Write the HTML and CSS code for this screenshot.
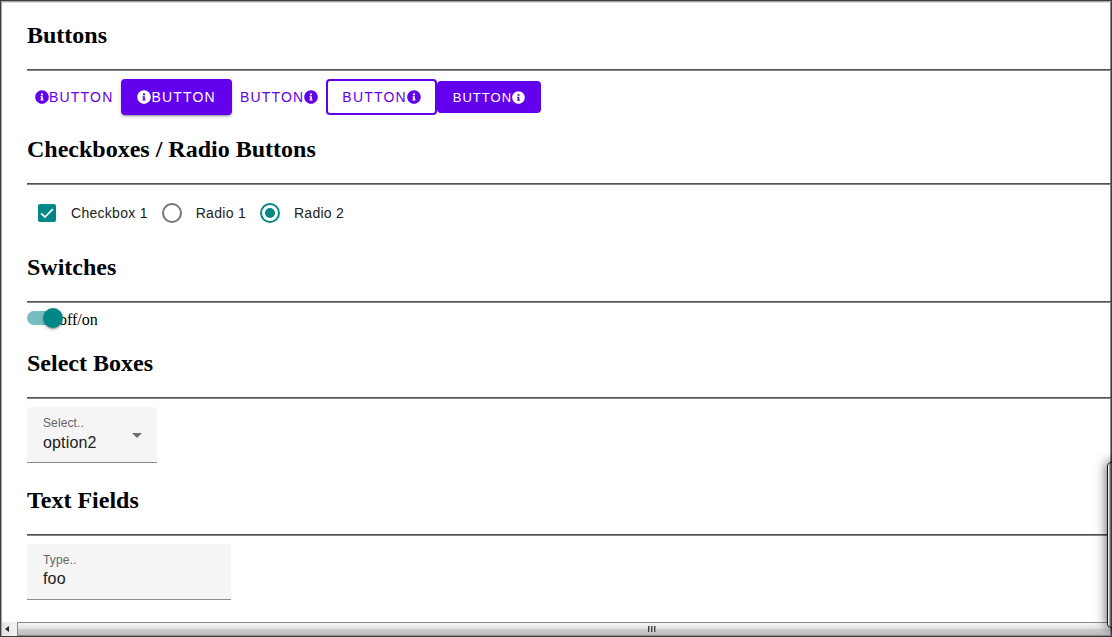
FILE: index.html
```html
<!DOCTYPE html>
<html lang="en">
<head>
<meta charset="utf-8">
<title>Components</title>
<link rel="stylesheet" href="styles.css">
</head>
<body>
<svg class="defs" aria-hidden="true">
  <symbol id="info" viewBox="0 0 512 512">
    <path fill="currentColor" fill-rule="evenodd" d="M256 8C119 8 8 119 8 256s111 248 248 248 248-111 248-248S393 8 256 8zm0 110a42 42 0 1 1 0 84 42 42 0 0 1 0-84zm56 254c0 7-5 12-12 12h-88c-7 0-12-5-12-12v-24c0-7 5-12 12-12h12v-64h-12c-7 0-12-5-12-12v-24c0-7 5-12 12-12h64c7 0 12 5 12 12v100h12c7 0 12 5 12 12z"/>
  </symbol>
</svg>
<main class="page">
  <section class="section">
    <h2 class="heading">Buttons</h2>
    <hr class="rule">
    <div class="row buttons">
      <button class="btn" type="button"><svg class="icon"><use href="#info"/></svg>BUTTON</button>
      <button class="btn raised" type="button"><svg class="icon"><use href="#info"/></svg>BUTTON</button>
      <button class="btn" type="button">BUTTON<svg class="icon"><use href="#info"/></svg></button>
      <button class="btn outlined" type="button">BUTTON<svg class="icon"><use href="#info"/></svg></button>
      <button class="btn dense" type="button">BUTTON<svg class="icon"><use href="#info"/></svg></button>
    </div>
  </section>
  <section class="section">
    <h2 class="heading">Checkboxes / Radio Buttons</h2>
    <hr class="rule">
    <div class="row choices">
      <label class="choice">
        <span class="touch">
          <input class="checkbox" type="checkbox" checked>
          <svg class="tick" viewBox="0 0 24 24"><path d="M2 12.5 8.5 19 22 5.5" fill="none" stroke="#fff" stroke-width="3"/></svg>
        </span>
        <span>Checkbox 1</span>
      </label>
      <label class="choice"><span class="touch"><input class="radio" type="radio" name="radios"></span><span>Radio 1</span></label>
      <label class="choice"><span class="touch"><input class="radio" type="radio" name="radios" checked></span><span>Radio 2</span></label>
    </div>
  </section>
  <section class="section">
    <h2 class="heading">Switches</h2>
    <hr class="rule">
    <div class="row switches">
      <input class="switch" id="power" type="checkbox" role="switch" checked>
      <label class="switch-label" for="power">off/on</label>
    </div>
  </section>
  <section class="section">
    <h2 class="heading">Select Boxes</h2>
    <hr class="rule">
    <div class="row selects">
      <div class="field field-select">
        <label class="field-label" for="choice">Select..</label>
        <select class="field-control" id="choice"><option>option1</option><option selected>option2</option></select>
        <svg class="arrow" viewBox="0 0 10 5"><path d="M0 0h10L5 5z" fill="#707070"/></svg>
      </div>
    </div>
  </section>
  <section class="section">
    <h2 class="heading">Text Fields</h2>
    <hr class="rule">
    <div class="row">
      <div class="field field-text">
        <label class="field-label" for="text">Type..</label>
        <input class="field-control" id="text" type="text" value="foo">
      </div>
    </div>
  </section>
</main>
<div class="scrollbar">
  <button class="scroll-left" type="button" aria-label="Scroll left"><svg class="scroll-arrow" viewBox="0 0 4 6"><path d="M4 0v6L0 3z" fill="#222"/></svg></button>
  <div class="scroll-thumb"><span class="grip"></span></div>
</div>
<aside class="panel"></aside>
</body>
</html>
```

FILE: styles.css
```css
* { box-sizing: border-box; }

body {
  display: flex;
  flex-direction: column;
  min-height: 100vh;
  margin: 0;
  border: 1px solid #403e40;
  box-shadow: inset 1px 1px 0 #a5a5a5, inset -1px 0 0 #858585, inset 0 2px 0 #ddd;
  background: #fff;
  color: #000;
  font-family: "Liberation Serif", "Times New Roman", serif;
  font-size: 16px;
  overflow: hidden;
}

.defs { position: absolute; width: 0; height: 0; }

.page { flex: 1; padding: 1px 0 22px 26px; }

.section { padding-top: 20px; }

.heading {
  margin: 0 0 20px;
  font-size: 24px;
  line-height: 27px;
}

.rule {
  height: 2px;
  margin: 0;
  border: 0;
  background: linear-gradient(#545254 50%, #858585 50%);
}

.row {
  display: flex;
  align-items: center;
  padding-top: 8px;
  font-family: "Liberation Sans", Arial, sans-serif;
}

.buttons { padding-bottom: 1px; }

.btn {
  display: flex;
  align-items: center;
  height: 36px;
  padding: 0 8px;
  border: 0;
  border-radius: 4px;
  background: transparent;
  color: #6200ee;
  font: 14px "Liberation Sans", Arial, sans-serif;
  letter-spacing: 0.085em;
}

.icon { width: 1em; height: 1em; }

.raised {
  padding: 0 16px;
  background: #6200ee;
  color: #fff;
  box-shadow: 0 3px 1px -2px rgba(0, 0, 0, .2), 0 2px 2px rgba(0, 0, 0, .14), 0 1px 5px rgba(0, 0, 0, .12);
}

.outlined { padding: 0 14px; border: 2px solid #6200ee; }

.dense {
  height: 32px;
  padding: 0 16px;
  background: #6200ee;
  color: #fff;
  font-size: 13px;
  letter-spacing: 1px;
}

.choices { gap: 4px; padding-bottom: 1px; }

.choice {
  display: flex;
  align-items: center;
  gap: 4px;
  color: #212121;
  font-size: 14px;
  letter-spacing: 0.02em;
}

.touch {
  position: relative;
  display: grid;
  place-items: center;
  width: 40px;
  height: 40px;
}

.checkbox {
  appearance: none;
  width: 18px;
  height: 18px;
  margin: 0;
  border: 2px solid #757575;
  border-radius: 2px;
}

.checkbox:checked { border-color: #018786; background: #018786; }

.tick { position: absolute; width: 14px; height: 14px; pointer-events: none; }

.radio {
  appearance: none;
  display: grid;
  place-items: center;
  width: 20px;
  height: 20px;
  margin: 0;
  border: 2px solid #757575;
  border-radius: 50%;
}

.radio:checked { border-color: #018786; }

.radio:checked::before {
  content: "";
  width: 10px;
  height: 10px;
  border-radius: 50%;
  background: #018786;
}

.switches { align-items: flex-start; height: 27px; }

.switch {
  appearance: none;
  position: relative;
  z-index: 1;
  width: 32px;
  height: 14px;
  margin: 0;
  border-radius: 7px;
  background: #77bfbe;
}

.switch::after {
  content: "";
  position: absolute;
  top: -3px;
  right: -4px;
  width: 20px;
  height: 20px;
  border-radius: 50%;
  background: #018786;
  box-shadow: 0 3px 1px -2px rgba(0, 0, 0, .2), 0 2px 2px rgba(0, 0, 0, .14), 0 1px 5px rgba(0, 0, 0, .12);
}

.switch-label {
  font-family: "Liberation Serif", "Times New Roman", serif;
  font-size: 16px;
  line-height: 18px;
}

.selects { padding-bottom: 4px; }

.field {
  position: relative;
  display: flex;
  flex-direction: column;
  height: 56px;
  padding: 8px 16px 0;
  border-bottom: 1px solid #8c8c8c;
  border-radius: 4px 4px 0 0;
  background: #f5f5f5;
}

.field-select { width: 130px; }
.field-text { width: 204px; }

.field-label {
  color: #666;
  font-size: 12px;
  line-height: 16px;
  letter-spacing: 0.01em;
}

.field-control {
  appearance: none;
  width: 100%;
  height: 22px;
  margin: 0;
  padding: 0;
  border: 0;
  outline: 0;
  background: transparent;
  color: #212121;
  font: 16px "Liberation Sans", Arial, sans-serif;
  letter-spacing: 0.01em;
}

.arrow {
  position: absolute;
  top: 26px;
  right: 15px;
  width: 10px;
  height: 5px;
  pointer-events: none;
}

.scrollbar {
  display: flex;
  height: 14px;
  margin: 0 1px;
  background: #e8e8e8;
}

.scroll-left {
  display: grid;
  place-items: center;
  width: 15px;
  padding: 0 5px 0 0;
  border: 0;
  background: linear-gradient(90deg, #e4e4e4, #f2f2f2);
}

.scroll-arrow { width: 4px; height: 6px; }

.scroll-thumb {
  flex: 1;
  display: grid;
  place-items: center;
  padding-left: 176px;
  border: solid #8a8a8a;
  border-width: 1px 0 1px 1px;
  background: linear-gradient(#f5f5f5, #e2e2e2 45%, #cdcdcf 50%, #bcbcbe);
}

.grip {
  width: 8px;
  height: 6px;
  background: repeating-linear-gradient(90deg, #444 0 1px, #999 1px 2px, #ddd 2px 3px);
}

.panel {
  position: fixed;
  right: -12px;
  bottom: 9px;
  width: 17px;
  height: 166px;
  border: 1px solid #111;
  border-radius: 4px;
  background: linear-gradient(90deg, #eee 0 1px, #aaa 1px 2px, #666 2px 3px, #3c3c3c 3px);
  box-shadow: 0 0 12px rgba(0, 0, 0, .7);
}
```
